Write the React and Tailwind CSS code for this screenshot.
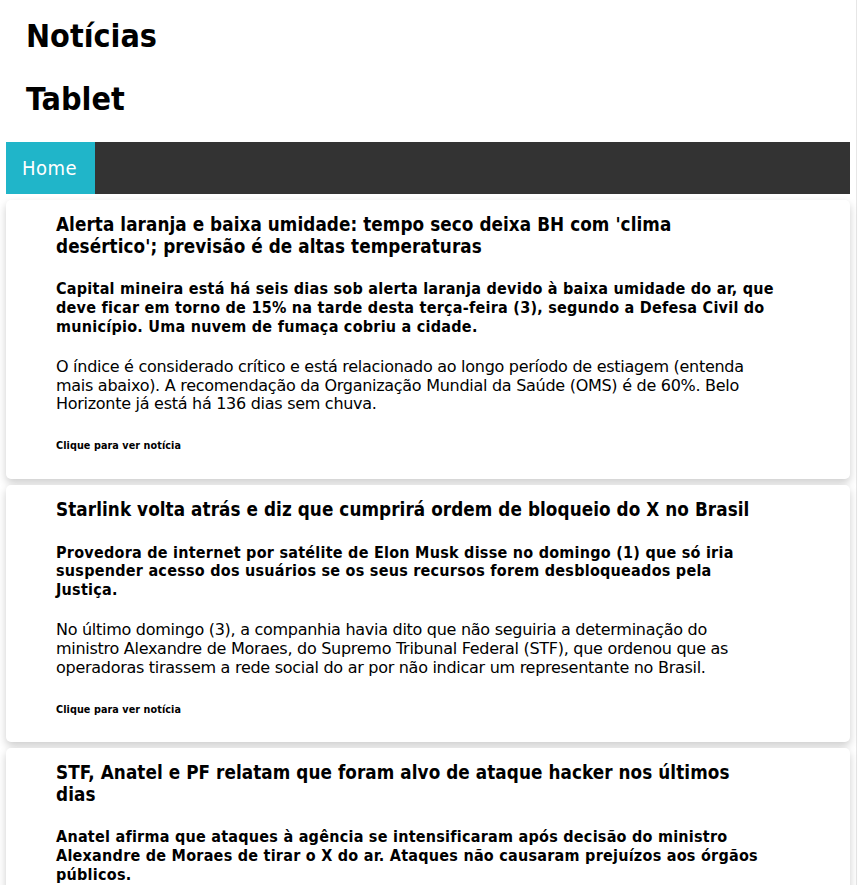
import React from "react";

const news = [
  {
    title: [
      "Alerta laranja e baixa umidade: tempo seco deixa BH com 'clima",
      "desértico'; previsão é de altas temperaturas",
    ],
    summary: [
      "Capital mineira está há seis dias sob alerta laranja devido à baixa umidade do ar, que",
      "deve ficar em torno de 15% na tarde desta terça-feira (3), segundo a Defesa Civil do",
      "município. Uma nuvem de fumaça cobriu a cidade.",
    ],
    body: [
      "O índice é considerado crítico e está relacionado ao longo período de estiagem (entenda",
      "mais abaixo). A recomendação da Organização Mundial da Saúde (OMS) é de 60%. Belo",
      "Horizonte já está há 136 dias sem chuva.",
    ],
  },
  {
    title: ["Starlink volta atrás e diz que cumprirá ordem de bloqueio do X no Brasil"],
    summary: [
      "Provedora de internet por satélite de Elon Musk disse no domingo (1) que só iria",
      "suspender acesso dos usuários se os seus recursos forem desbloqueados pela",
      "Justiça.",
    ],
    body: [
      "No último domingo (3), a companhia havia dito que não seguiria a determinação do",
      "ministro Alexandre de Moraes, do Supremo Tribunal Federal (STF), que ordenou que as",
      "operadoras tirassem a rede social do ar por não indicar um representante no Brasil.",
    ],
  },
  {
    title: [
      "STF, Anatel e PF relatam que foram alvo de ataque hacker nos últimos",
      "dias",
    ],
    summary: [
      "Anatel afirma que ataques à agência se intensificaram após decisão do ministro",
      "Alexandre de Moraes de tirar o X do ar. Ataques não causaram prejuízos aos órgãos",
      "públicos.",
    ],
    body: [
      "Segundo os órgãos, as tentativas de invasão foram identificadas e contidas pelas",
      "equipes de segurança, sem vazamento de dados ou interrupção dos serviços.",
    ],
  },
];

function Lines({ lines }) {
  return lines.map((l, i) => (
    <React.Fragment key={i}>
      {i > 0 && <br />}
      {l}
    </React.Fragment>
  ));
}

function Card({ item }) {
  return (
    <div className="mt-[6px] rounded-[5px] bg-white pl-[50px] pr-[30px] pb-[26px] pt-[14px] shadow-[0_4px_8px_0_rgba(0,0,0,0.2)]">
      <h3 className="whitespace-nowrap text-[18.72px] font-bold leading-[21.6px] tracking-[0.08px] text-black">
        <Lines lines={item.title} />
      </h3>
      <p className="mt-[23px] whitespace-nowrap text-[16px] font-bold leading-[18.7px] tracking-[0.25px] text-black">
        <Lines lines={item.summary} />
      </p>
      <p className="mt-[21.5px] whitespace-nowrap text-[16px] leading-[18.7px] tracking-[-0.28px] text-black [font-stretch:normal]">
        <Lines lines={item.body} />
      </p>
      <h6 className="mt-[26.5px] text-[10.72px] font-bold leading-[12.5px] tracking-[0.08px] text-black">
        Clique para ver notícia
      </h6>
    </div>
  );
}

export default function App() {
  return (
    <div className="min-h-screen w-[857px] border-r border-[#e6e6e6] bg-white px-[6px] pb-[20px] text-black [font-family:'DejaVu_Sans',sans-serif] [font-stretch:condensed]">
      <h1 className="pl-[20px] pt-[18px] text-[32px] font-bold leading-[37px]">Notícias</h1>
      <h1 className="mt-[26px] pl-[20px] text-[32px] font-bold leading-[37px]">Tablet</h1>
      <nav className="mt-[24px] flex h-[52px] bg-[#333333]">
        <a className="flex w-[89px] items-center bg-[#20b5c9] pl-[16px] text-[20px] tracking-[0.5px] text-white">
          Home
        </a>
      </nav>
      {news.map((n, i) => (
        <Card key={i} item={n} />
      ))}
    </div>
  );
}
